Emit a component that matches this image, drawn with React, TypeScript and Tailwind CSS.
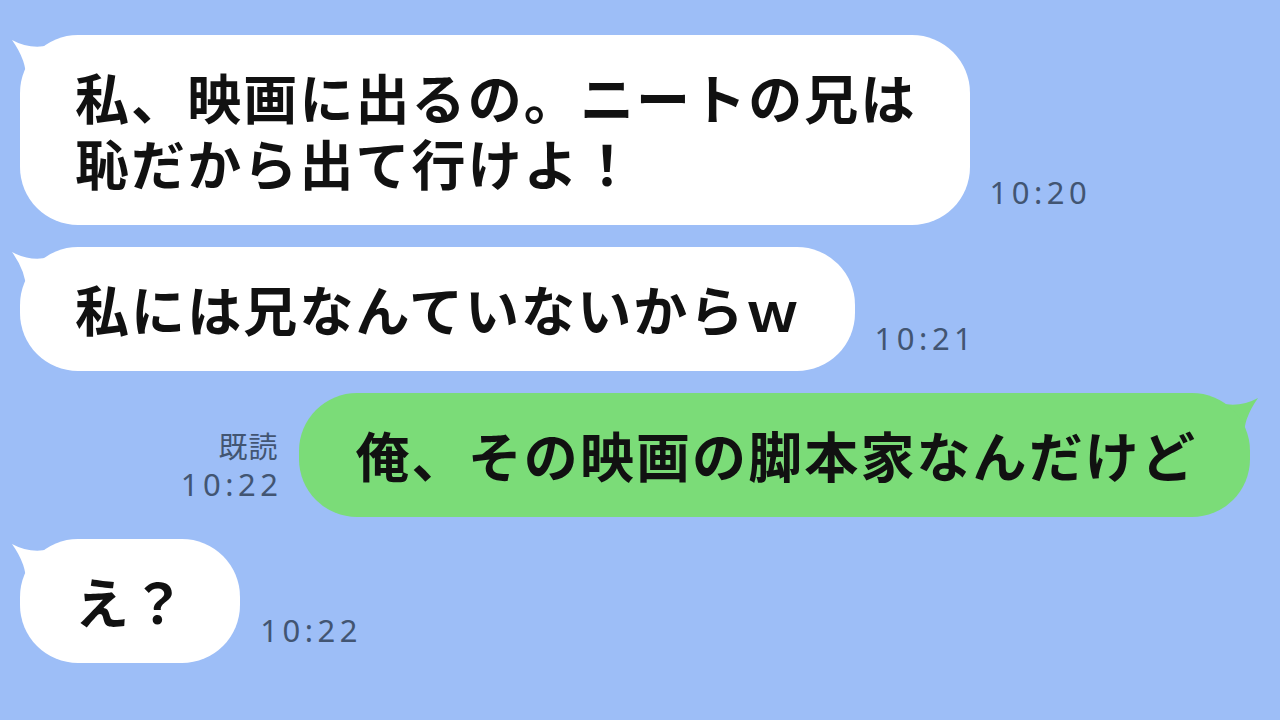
const msgFont = { fontFamily: '"Noto Sans CJK JP", "Noto Sans", sans-serif' };
const timeFont = { fontFamily: '"Noto Sans", "Noto Sans CJK JP", sans-serif' };

function LeftTail({ color }: { color: string }) {
  return (
    <svg className="absolute -left-[10px] top-0 pointer-events-none" width="50" height="45" viewBox="0 0 50 45">
      <path d="M2 5 Q22 16 44 9 L44 45 L16 45 Q17 26 2 5 Z" fill={color} />
    </svg>
  );
}

function RightTail({ color }: { color: string }) {
  return (
    <svg className="absolute -right-[10px] top-0 pointer-events-none" width="50" height="45" viewBox="0 0 50 45">
      <path d="M48 5 Q28 16 6 9 L6 45 L34 45 Q33 26 48 5 Z" fill={color} />
    </svg>
  );
}

function Time({ t, read }: { t: string; read?: boolean }) {
  return (
    <div className="flex flex-col items-end text-[#425572] mb-[15px]" style={timeFont}>
      {read && <span className="text-[29px] leading-[42px] tracking-[1px]" style={msgFont}>既読</span>}
      <span className="text-[31px] leading-[36px] tracking-[4.5px] -mr-[4px]">{t}</span>
    </div>
  );
}

function Received({ lines, time }: { lines: string[]; time: string }) {
  return (
    <div className="flex items-end gap-[20px]">
      <div className="relative">
        <LeftTail color="#ffffff" />
        <div
          className="relative bg-white rounded-[58px] pl-[55px] pr-[53px] py-[29px] text-[54px] leading-[66px] font-bold text-[#111111] tracking-[2.1px] whitespace-nowrap"
          style={msgFont}
        >
          {lines.map((l) => (
            <div key={l}>{l}</div>
          ))}
        </div>
      </div>
      <Time t={time} />
    </div>
  );
}

export default function App() {
  return (
    <div className="w-[1280px] h-[720px] overflow-hidden bg-[#9dbef7] pl-[20px] pr-[30px] pt-[35px] flex flex-col gap-[22px]">
      <Received lines={['私、映画に出るの。ニートの兄は', '恥だから出て行けよ！']} time="10:20" />
      <Received lines={['私には兄なんていないからｗ']} time="10:21" />
      <div className="flex items-end justify-end gap-[20px]">
        <Time t="10:22" read />
        <div className="relative">
          <RightTail color="#7bdc78" />
          <div
            className="relative bg-[#7bdc78] rounded-[58px] pl-[57px] pr-[53px] py-[29px] text-[54px] leading-[66px] font-bold text-[#111111] tracking-[2.1px] whitespace-nowrap"
            style={msgFont}
          >
            俺、その映画の脚本家なんだけど
          </div>
        </div>
      </div>
      <Received lines={['え？']} time="10:22" />
    </div>
  );
}
